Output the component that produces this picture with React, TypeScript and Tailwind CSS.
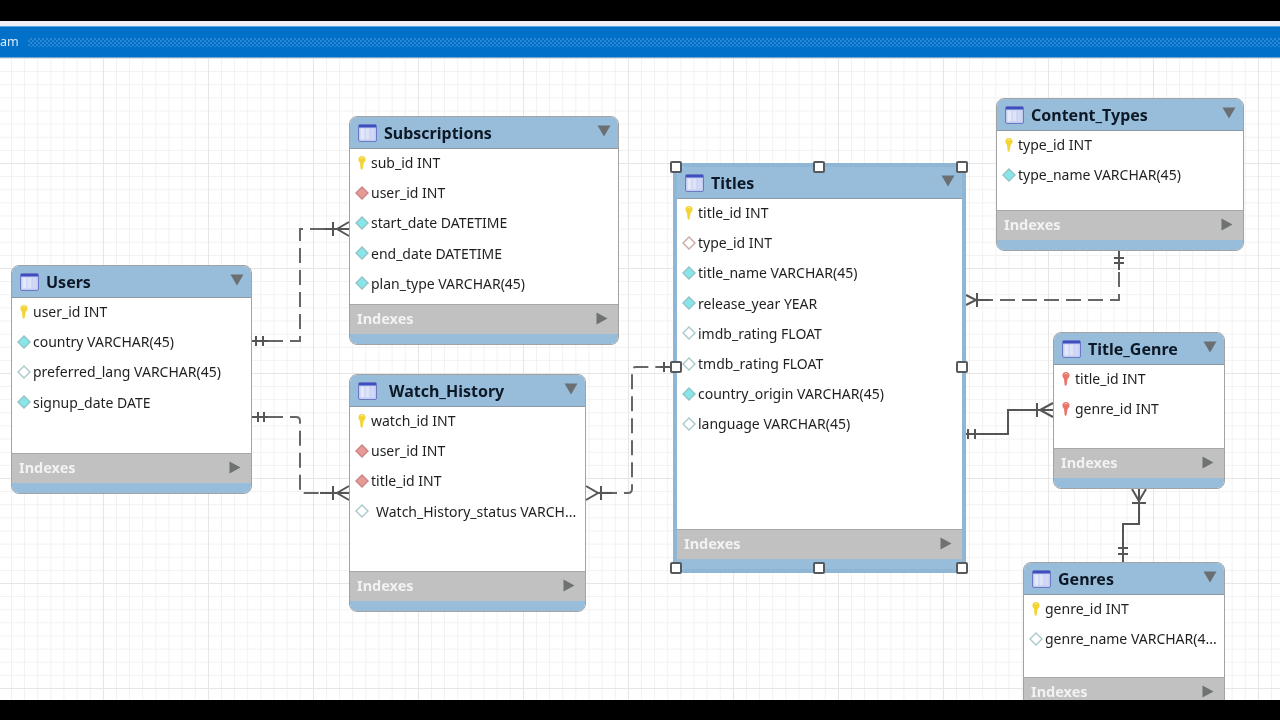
const FONT = "font-['Noto_Sans','Liberation_Sans',sans-serif]";

type Kind = "pk" | "pkfk" | "fk" | "fkOpen" | "col" | "colOpen";
type Column = { kind: Kind; text: string; indent?: boolean };
type Entity = {
  name: string;
  box: string;
  titleGap: string;
  selected?: boolean;
  columns: Column[];
};

const ENTITIES: Entity[] = [
  {
    name: "Users",
    box: "left-[11px] top-[208px] w-[241px] h-[229px]",
    titleGap: "ml-[7px]",
    columns: [
      { kind: "pk", text: "user_id INT" },
      { kind: "col", text: "country VARCHAR(45)" },
      { kind: "colOpen", text: "preferred_lang VARCHAR(45)" },
      { kind: "col", text: "signup_date DATE" },
    ],
  },
  {
    name: "Subscriptions",
    box: "left-[349px] top-[59px] w-[270px] h-[229px]",
    titleGap: "ml-[7px]",
    columns: [
      { kind: "pk", text: "sub_id INT" },
      { kind: "fk", text: "user_id INT" },
      { kind: "col", text: "start_date DATETIME" },
      { kind: "col", text: "end_date DATETIME" },
      { kind: "col", text: "plan_type VARCHAR(45)" },
    ],
  },
  {
    name: "Watch_History",
    box: "left-[349px] top-[317px] w-[237px] h-[238px]",
    titleGap: "ml-[12px]",
    columns: [
      { kind: "pk", text: "watch_id INT" },
      { kind: "fk", text: "user_id INT" },
      { kind: "fk", text: "title_id INT" },
      { kind: "colOpen", text: "Watch_History_status VARCH...", indent: true },
    ],
  },
  {
    name: "Titles",
    box: "left-[676px] top-[109px] w-[287px] h-[404px]",
    titleGap: "ml-[7px]",
    selected: true,
    columns: [
      { kind: "pk", text: "title_id INT" },
      { kind: "fkOpen", text: "type_id INT" },
      { kind: "col", text: "title_name VARCHAR(45)" },
      { kind: "col", text: "release_year YEAR" },
      { kind: "colOpen", text: "imdb_rating FLOAT" },
      { kind: "colOpen", text: "tmdb_rating FLOAT" },
      { kind: "col", text: "country_origin VARCHAR(45)" },
      { kind: "colOpen", text: "language VARCHAR(45)" },
    ],
  },
  {
    name: "Content_Types",
    box: "left-[996px] top-[41px] w-[248px] h-[153px]",
    titleGap: "ml-[7px]",
    columns: [
      { kind: "pk", text: "type_id INT" },
      { kind: "col", text: "type_name VARCHAR(45)" },
    ],
  },
  {
    name: "Title_Genre",
    box: "left-[1053px] top-[275px] w-[172px] h-[157px]",
    titleGap: "ml-[7px]",
    columns: [
      { kind: "pkfk", text: "title_id INT" },
      { kind: "pkfk", text: "genre_id INT" },
    ],
  },
  {
    name: "Genres",
    box: "left-[1023px] top-[505px] w-[202px] h-[156px]",
    titleGap: "ml-[7px]",
    columns: [
      { kind: "pk", text: "genre_id INT" },
      { kind: "colOpen", text: "genre_name VARCHAR(4..." },
    ],
  },
];

const HANDLES = [
  "left-[670px] top-[104px]",
  "left-[813px] top-[104px]",
  "left-[956px] top-[104px]",
  "left-[670px] top-[304px]",
  "left-[956px] top-[304px]",
  "left-[670px] top-[505px]",
  "left-[813px] top-[505px]",
  "left-[956px] top-[505px]",
];

function TableIcon() {
  return (
    <svg width="19" height="18" viewBox="0 0 19 18" className="shrink-0">
      <rect x="0.5" y="0.5" width="18" height="17" rx="1.5" fill="#c3cdf0" stroke="#6b78c4" />
      <rect x="1" y="1" width="17" height="2.5" fill="#3d4fc0" />
      <rect x="2.5" y="4.5" width="4" height="11" fill="#e4e9fa" />
      <rect x="7.5" y="4.5" width="4" height="11" fill="#dde3f8" />
      <rect x="12.5" y="4.5" width="4" height="11" fill="#d2d9f5" />
    </svg>
  );
}

function ColumnIcon({ kind }: { kind: Kind }) {
  if (kind === "pk" || kind === "pkfk") {
    const fill = kind === "pk" ? "#f3d433" : "#e8776a";
    return (
      <svg width="12" height="16" viewBox="0 0 12 16" className="shrink-0">
        <path d="M6 1C3.6 1 2.4 2.7 2.4 4.6 2.4 6.2 3.4 7 4 8L4.6 14C5 15 6.4 15 6.6 14L7.6 8C8.4 7 9.6 6 9.6 4.4 9.6 2.6 8.2 1 6 1Z" fill={fill} />
        <path d="M4.6 3C5.6 2.2 7 2.4 7.6 3.4" stroke="#fff" strokeOpacity="0.6" fill="none" />
      </svg>
    );
  }
  const styles: Record<string, { fill: string; stroke: string }> = {
    fk: { fill: "#e89a96", stroke: "#c98583" },
    fkOpen: { fill: "#ffffff", stroke: "#c9a8a6" },
    col: { fill: "#86e6e8", stroke: "#93c3c8" },
    colOpen: { fill: "#ffffff", stroke: "#a9c8cc" },
  };
  const s = styles[kind];
  return (
    <svg width="14" height="14" viewBox="0 0 14 14" className="shrink-0">
      <path d="M7 1 13 7 7 13 1 7Z" fill={s.fill} stroke={s.stroke} strokeWidth="1.4" />
    </svg>
  );
}

function EntityCard({ entity }: { entity: Entity }) {
  return (
    <div
      className={`absolute ${entity.box} flex flex-col overflow-hidden rounded-[8px] border ${
        entity.selected ? "border-[#8fb7d5] outline-[3px] outline-[#8fb7d5]" : "border-[#a3a3a3]"
      }`}
    >
      <div className="flex h-[31px] shrink-0 items-center bg-[#97bdda] pl-[8px] pr-[7px]">
        <TableIcon />
        <span className={`${entity.titleGap} text-[16px] font-bold text-[#0d1826]`}>{entity.name}</span>
        <svg width="14" height="12" viewBox="0 0 14 12" className="mb-[3px] ml-auto">
          <path d="M0.5 0.5H13.5L7 11.5Z" fill="#6b6f72" />
        </svg>
      </div>
      <div className="min-h-0 flex-1 border-t border-[#8c99a3] bg-white">
        {entity.columns.map((c) => (
          <div key={c.text} className="flex h-[30.2px] items-center pb-[3px] pl-[4px]">
            <span className="flex w-[16px] shrink-0 justify-center">
              <ColumnIcon kind={c.kind} />
            </span>
            <span
              className={`${c.indent ? "ml-[6px]" : "ml-px"} whitespace-nowrap text-[14px] text-[#1f1f1f]`}
            >
              {c.text}
            </span>
          </div>
        ))}
      </div>
      <div className="flex h-[30px] shrink-0 items-center border-t border-[#a8a8a8] bg-[#c1c1c1] pb-[2px] pl-[7px] pr-[10px]">
        <span className="text-[14.5px] font-bold leading-none text-[#f2f2f2]">Indexes</span>
        <svg width="12" height="13" viewBox="0 0 12 13" className="ml-auto">
          <path d="M0.5 0.5 11.5 6.5 0.5 12.5Z" fill="#6f7272" />
        </svg>
      </div>
      <div className="h-[10px] shrink-0 bg-[#97bdda]" />
    </div>
  );
}

function Connectors() {
  const dashed = { fill: "none", stroke: "#666", strokeWidth: 2, strokeDasharray: "15 7" };
  return (
    <svg className="absolute inset-0" width="1280" height="643" viewBox="0 57 1280 643">
      <g {...dashed}>
        <path d="M268 341H300V229H333" />
        <path d="M268 417H296Q300 417 300 421V493H333" />
        <path d="M602 493H628Q632 493 632 489V371Q632 367 636 367H664" />
        <path d="M978 300H1119V266" />
      </g>
      <g fill="none" stroke="#555" strokeWidth="2">
        {/* Users -> Subscriptions */}
        <path d="M252 341H268M256 336V346M263 336V346" />
        <path d="M324 229H349M333 222V236M349 222L337 229L349 236" />
        {/* Users -> Watch_History */}
        <path d="M252 417H268M258 412V422M264 412V422" />
        <path d="M320 493H349M333 486V500M349 486L337 493L349 500" />
        {/* Watch_History -> Titles */}
        <path d="M586 486L598 493L586 500M601 486V500M598 493H612" />
        <path d="M660 367H676M664 362V372M671 362V372" />
        {/* Titles -> Content_Types */}
        <path d="M966 295L976 300L966 305M977 293V307M976 300H990" />
        <path d="M1119 251V270M1114 258H1124M1114 263H1124" />
        {/* Titles -> Title_Genre */}
        <path d="M966 434H1008V410H1053M968 429V439M975 429V439" />
        <path d="M1037 403V417M1053 403L1040 410L1053 417" />
        {/* Title_Genre -> Genres */}
        <path d="M1139 489V524H1123V562M1118 548H1128M1118 554H1128" />
        <path d="M1132 489L1139 501L1146 489M1132 503H1146" />
      </g>
    </svg>
  );
}

export default function App() {
  return (
    <div className={`flex h-[720px] w-[1280px] flex-col overflow-hidden bg-black blur-[0.4px] ${FONT}`}>
      <div className="h-[21px] shrink-0 bg-black" />
      <div className="h-[5px] shrink-0 bg-[#eef0f5]" />
      <div className="relative z-10 flex h-[31px] shrink-0 items-center gap-[9px] border-t border-[#5aa5dc] bg-[#0070c9] shadow-[0_1px_0_#6da6d4]">
        <span className="text-[12.5px] leading-none text-[#d9ecfa]">am</span>
        <div className="h-[9px] flex-1 bg-[repeating-conic-gradient(#2a85d2_0_25%,transparent_0_50%)] bg-[size:4px_4px]" />
      </div>
      <div className="relative min-h-0 flex-1 overflow-hidden bg-white bg-[linear-gradient(#e6e6e6_1px,transparent_1px),linear-gradient(90deg,#e6e6e6_1px,transparent_1px),linear-gradient(#f1f1f1_1px,transparent_1px),linear-gradient(90deg,#f1f1f1_1px,transparent_1px)] bg-[size:105px_105px,105px_105px,13.125px_13.125px,13.125px_13.125px] bg-[position:0px_1px,103px_0px,0px_1px,11px_0px]">
        <Connectors />
        {ENTITIES.map((e) => (
          <EntityCard key={e.name} entity={e} />
        ))}
        {HANDLES.map((h) => (
          <div
            key={h}
            className={`absolute ${h} h-[12px] w-[12px] rounded-[2px] border-2 border-[#555a5e] bg-white`}
          />
        ))}
      </div>
      <div className="h-[20px] shrink-0 bg-black" />
    </div>
  );
}
